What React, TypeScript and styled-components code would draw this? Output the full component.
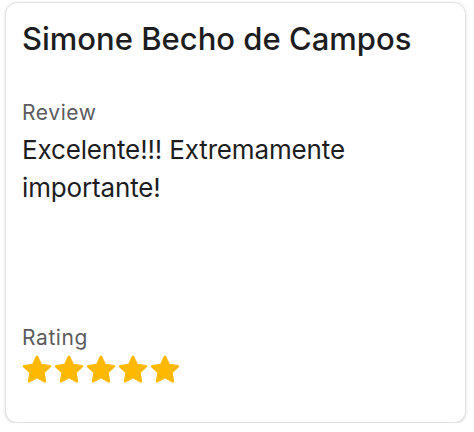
import React from "react";
import styled, { createGlobalStyle } from "styled-components";

const GlobalStyle = createGlobalStyle`
  html, body { margin: 0; padding: 0; background: #ffffff; }
  body { font-family: Inter, "Noto Sans", sans-serif; -webkit-font-smoothing: antialiased; }
`;

const Page = styled.div`
  padding: 2px 0 0 5px;
`;

const Card = styled.div`
  box-sizing: border-box;
  width: 461px;
  height: 421px;
  border: 1px solid #e2e2e2;
  border-radius: 12px;
  box-shadow: 0 1px 3px rgba(0, 0, 0, 0.14);
  background: #fff;
  padding: 16px 16px 38px 16px;
  display: flex;
  flex-direction: column;
`;

const Title = styled.h2`
  margin: 0;
  font-size: 31px;
  line-height: 40px;
  font-weight: 500;
  color: #1d1d1f;
  letter-spacing: 0;
`;

const Section = styled.div<{ $grow?: boolean }>`
  display: flex;
  flex-direction: column;
  flex: ${(p) => (p.$grow ? 1 : "none")};
  margin-top: ${(p) => (p.$grow ? "41.5px" : "0")};
`;

const Label = styled.div`
  font-size: 21px;
  line-height: 24px;
  color: #5c5c60;
  letter-spacing: 0.6px;
`;

const Body = styled.p`
  margin: 6px 0 0;
  font-size: 26px;
  line-height: 38px;
  color: #1d1d1f;
  letter-spacing: -0.15px;
`;

const Stars = styled.div`
  display: flex;
  gap: 4px;
  margin-top: 6.5px;
  padding-left: 1px;
`;

const StarSvg = styled.svg`
  display: block;
  overflow: visible;
`;

const Star = () => (
  <StarSvg width="28" height="28" viewBox="2 2 20 20">
    <path
      d="M12 2.6l2.8 5.9 6.4.8-4.7 4.4 1.2 6.4L12 17l-5.7 3.1 1.2-6.4-4.7-4.4 6.4-.8z"
      fill="#FFB800"
      stroke="#FFB800"
      strokeWidth="1.8"
      strokeLinejoin="round"
    />
  </StarSvg>
);

export default function App() {
  return (
    <>
      <GlobalStyle />
      <Page>
        <Card>
          <Title>Simone Becho de Campos</Title>
          <Section $grow>
            <Label>Review</Label>
            <Body>Excelente!!! Extremamente importante!</Body>
          </Section>
          <Section>
            <Label>Rating</Label>
            <Stars>
              {[0, 1, 2, 3, 4].map((i) => (
                <Star key={i} />
              ))}
            </Stars>
          </Section>
        </Card>
      </Page>
    </>
  );
}
